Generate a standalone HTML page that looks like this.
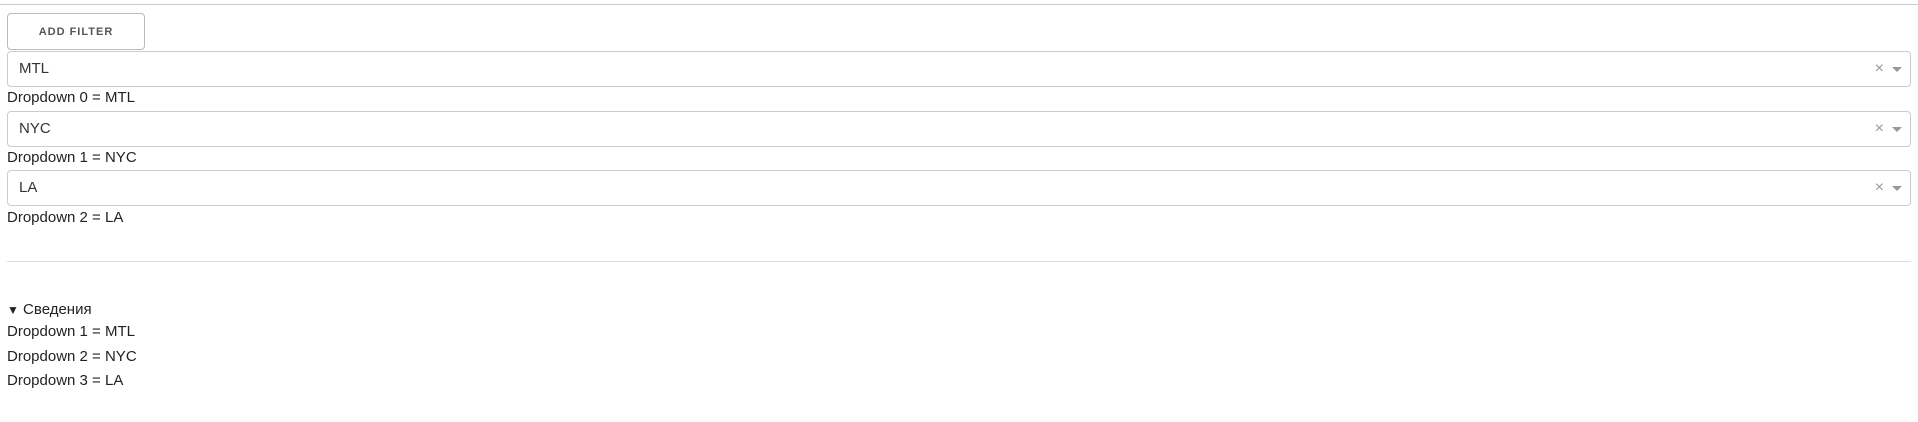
<!DOCTYPE html>
<html><head><meta charset="utf-8"><style>
body{margin:0;width:1918px;height:422px;background:#fff;font-family:"Liberation Sans",Arial,sans-serif;font-size:15px;color:#222;position:relative;overflow:hidden}
.a{position:absolute}
.top{left:0;right:0;top:4px;height:1px;background:#ccc}
.btn{left:7px;top:13px;width:138px;height:37px;border:1px solid #bbb;border-radius:4px;box-sizing:border-box;font-size:11px;font-weight:bold;letter-spacing:1px;color:#555;text-align:center;line-height:36px}
.dd{left:7px;width:1904px;height:36px;border:1px solid #ccc;border-radius:4px;box-sizing:border-box;line-height:34px;padding-left:11px;color:#333}
.x{position:absolute;right:26px;top:0;color:#999;font-size:16px}
.car{position:absolute;right:8px;top:15px;width:0;height:0;border-left:5px solid transparent;border-right:5px solid transparent;border-top:5px solid #999}
.t{left:7px;line-height:20px}
.hr{left:7px;width:1904px;top:261px;height:1px;background:#ddd}
</style></head><body>
<div class="a top"></div>
<div class="a btn">ADD FILTER</div>
<div class="a dd" style="top:51px">MTL<span class="x">×</span><span class="car"></span></div>
<div class="a t" style="top:88px">Dropdown 0 = MTL</div>
<div class="a dd" style="top:111px">NYC<span class="x">×</span><span class="car"></span></div>
<div class="a t" style="top:148px">Dropdown 1 = NYC</div>
<div class="a dd" style="top:170px">LA<span class="x">×</span><span class="car"></span></div>
<div class="a t" style="top:208px">Dropdown 2 = LA</div>
<div class="a hr"></div>
<div class="a t" style="top:300px"><span style="font-size:12px">▼</span> Сведения</div>
<div class="a t" style="top:322px">Dropdown 1 = MTL</div>
<div class="a t" style="top:347px">Dropdown 2 = NYC</div>
<div class="a t" style="top:371px">Dropdown 3 = LA</div>
</body></html>
